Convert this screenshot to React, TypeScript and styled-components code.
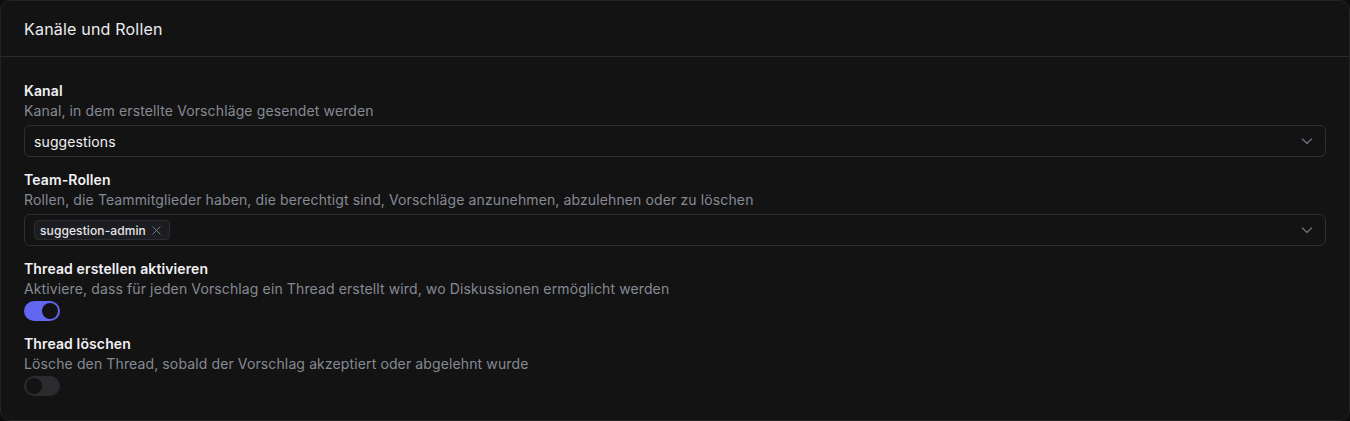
import React, { useState } from 'react';
import styled, { createGlobalStyle } from 'styled-components';

const GlobalStyle = createGlobalStyle`
  * { box-sizing: border-box; }
  html, body { margin: 0; padding: 0; background: #0c0c0d; }
  body {
    font-family: Inter, "Noto Sans", sans-serif;
    -webkit-font-smoothing: antialiased;
  }
`;

const Card = styled.section`
  width: 1350px;
  height: 421px;
  background: #131314;
  border: 1px solid #232326;
  border-radius: 10px;
  overflow: hidden;
`;

const CardHeader = styled.header`
  height: 56px;
  display: flex;
  align-items: center;
  padding: 0 23px;
  border-bottom: 1px solid #2a2a2d;
  color: #ececee;
  font-size: 16px;
  font-weight: 400;
  letter-spacing: 0.2px;
`;

const CardBody = styled.div`
  display: flex;
  flex-direction: column;
  gap: 13px;
  padding: 24px 23px 0;
`;

const Field = styled.div`
  display: flex;
  flex-direction: column;
`;

const Label = styled.div`
  color: #f1f1f3;
  font-size: 14px;
  font-weight: 600;
  line-height: 20px;
  letter-spacing: 0.12px;
`;

const Description = styled.div`
  color: #868a93;
  font-size: 14px;
  font-weight: 400;
  line-height: 20px;
  letter-spacing: 0.12px;
  margin-bottom: 4px;
`;

const SelectBox = styled.div`
  height: 32px;
  display: flex;
  align-items: center;
  justify-content: space-between;
  padding: 0 8px 0 9px;
  border: 1px solid #2f3034;
  border-radius: 6px;
  background: #131314;
  color: #f1f1f3;
  font-size: 14px;
  letter-spacing: 0.12px;
`;

const Tags = styled.div`
  display: flex;
  align-items: center;
  gap: 6px;
`;

const Tag = styled.span`
  height: 20px;
  display: inline-flex;
  align-items: center;
  gap: 6px;
  padding: 0 8px 0 5px;
  border: 1px solid #2c2d31;
  border-radius: 4px;
  background: #1c1d20;
  color: #e6e6e9;
  font-size: 12px;
  font-weight: 500;
  letter-spacing: 0.1px;
`;

const Chevron = styled.svg`
  width: 20px;
  height: 20px;
  color: #6b6f78;
  flex-shrink: 0;
`;

const Switch = styled.button<{ $on: boolean }>`
  width: 36px;
  height: 20px;
  margin-top: -2px;
  padding: 2px;
  border: none;
  border-radius: 10px;
  background: ${p => (p.$on ? '#6366f1' : '#2a2b2f')};
  display: flex;
  justify-content: ${p => (p.$on ? 'flex-end' : 'flex-start')};
  cursor: pointer;

  &::after {
    content: '';
    width: 16px;
    height: 16px;
    border-radius: 50%;
    background: #131314;
  }
`;

const ChevronDown = () => (
  <Chevron viewBox="0 0 24 24" fill="none" stroke="currentColor" strokeWidth={1.6} strokeLinecap="round" strokeLinejoin="round">
    <path d="m6.5 9.5 5.5 5.5 5.5-5.5" />
  </Chevron>
);

const Cross = () => (
  <svg width="9" height="9" viewBox="0 0 10 10" fill="none" stroke="#7c7f87" strokeWidth={1.1} strokeLinecap="round">
    <path d="M1 1l8 8M9 1l-8 8" />
  </svg>
);

export default function App() {
  const [createThread, setCreateThread] = useState(true);
  const [deleteThread, setDeleteThread] = useState(false);

  return (
    <>
      <GlobalStyle />
      <Card>
        <CardHeader>Kanäle und Rollen</CardHeader>
        <CardBody>
          <Field>
            <Label>Kanal</Label>
            <Description>Kanal, in dem erstellte Vorschläge gesendet werden</Description>
            <SelectBox>
              <span>suggestions</span>
              <ChevronDown />
            </SelectBox>
          </Field>
          <Field>
            <Label>Team-Rollen</Label>
            <Description>
              Rollen, die Teammitglieder haben, die berechtigt sind, Vorschläge anzunehmen, abzulehnen oder zu löschen
            </Description>
            <SelectBox>
              <Tags>
                <Tag>
                  suggestion-admin
                  <Cross />
                </Tag>
              </Tags>
              <ChevronDown />
            </SelectBox>
          </Field>
          <Field>
            <Label>Thread erstellen aktivieren</Label>
            <Description>
              Aktiviere, dass für jeden Vorschlag ein Thread erstellt wird, wo Diskussionen ermöglicht werden
            </Description>
            <Switch $on={createThread} onClick={() => setCreateThread(v => !v)} />
          </Field>
          <Field>
            <Label>Thread löschen</Label>
            <Description>Lösche den Thread, sobald der Vorschlag akzeptiert oder abgelehnt wurde</Description>
            <Switch $on={deleteThread} onClick={() => setDeleteThread(v => !v)} />
          </Field>
        </CardBody>
      </Card>
    </>
  );
}
